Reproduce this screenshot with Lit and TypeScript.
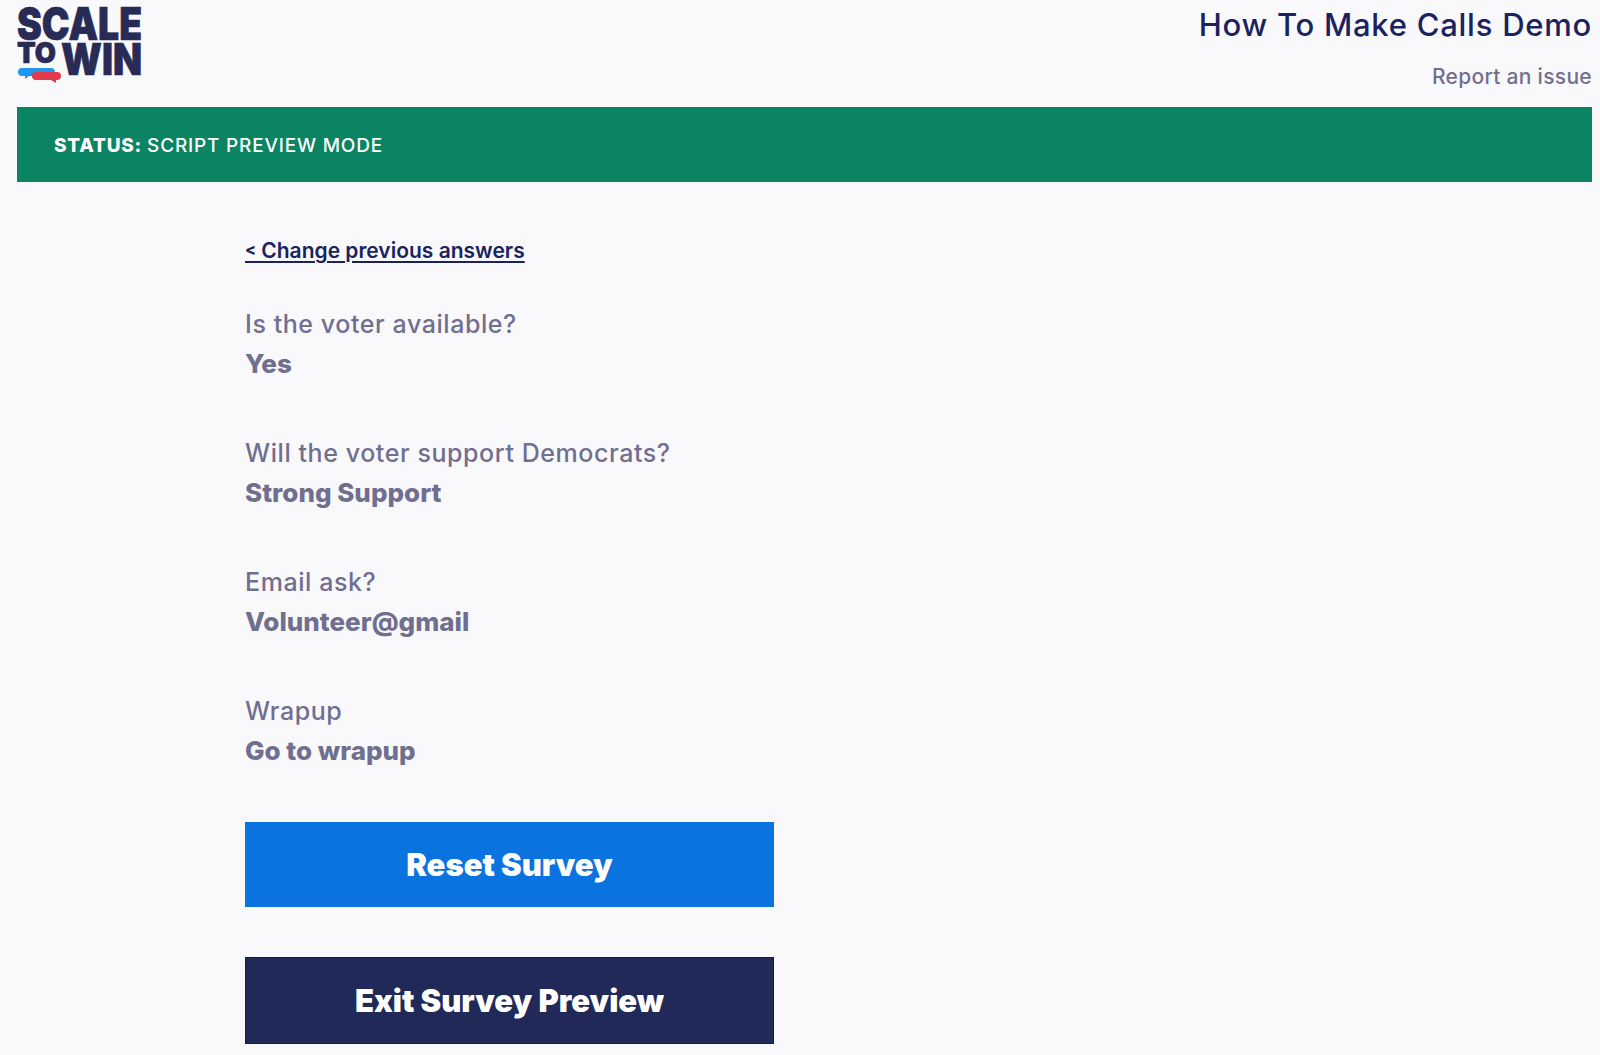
import { LitElement, html, css } from "lit";
import { customElement } from "lit/decorators.js";

const answers = [
  ["Is the voter available?", "Yes"],
  ["Will the voter support Democrats?", "Strong Support"],
  ["Email ask?", "Volunteer@gmail"],
  ["Wrapup", "Go to wrapup"],
];

@customElement("app-root")
export class AppRoot extends LitElement {
  static styles = css`
    :host {
      display: block;
      height: 1055px;
      overflow: hidden;
      box-sizing: border-box;
      padding: 0 8px 0 17px;
      background: #f9f9fc;
      font-family: Inter, "Liberation Sans", sans-serif;
    }
    .header {
      display: flex;
      justify-content: space-between;
      height: 107px;
    }
    .logo {
      display: block;
      width: 130px;
      height: 90px;
      overflow: visible;
    }
    .logo text {
      font-family: Inter, sans-serif;
      font-weight: 900;
      fill: #282b55;
      stroke: #282b55;
      stroke-width: 0.7;
    }
    .titles {
      display: flex;
      flex-direction: column;
      align-items: flex-end;
    }
    .title {
      margin-top: 5px;
      font-size: 31px;
      line-height: 40px;
      font-weight: 500;
      color: #1a2360;
      letter-spacing: 0.75px;
    }
    .report {
      margin-top: 19px;
      font-size: 21px;
      line-height: 26px;
      font-weight: 500;
      color: #716f8f;
      letter-spacing: 0.3px;
    }
    .status {
      height: 75px;
      box-sizing: border-box;
      padding: 2px 37px 0;
      display: flex;
      align-items: center;
      gap: 5px;
      background: #0b8463;
      color: #fff;
      font-size: 19px;
      font-weight: 500;
      letter-spacing: 0.8px;
    }
    .status b {
      font-weight: 800;
    }
    .content {
      width: 529px;
      margin-left: 228px;
      padding-top: 56px;
      display: flex;
      flex-direction: column;
    }
    .back {
      font-size: 21px;
      line-height: 26px;
      font-weight: 600;
      color: #1a2360;
      letter-spacing: 0;
      text-decoration: underline;
      text-underline-offset: 3px;
    }
    .lt {
      font-size: 16px;
      font-weight: 800;
      vertical-align: 3px;
      line-height: 1;
    }
    .answers {
      margin-top: 43px;
      display: flex;
      flex-direction: column;
      gap: 56px;
      color: #716f8f;
    }
    .q {
      font-size: 25px;
      line-height: 34px;
      font-weight: 500;
      letter-spacing: 0.57px;
    }
    .a {
      margin-top: 7px;
      font-size: 26px;
      line-height: 32px;
      font-weight: 800;
    }
    .btn {
      height: 85px;
      display: flex;
      align-items: center;
      justify-content: center;
      color: #fff;
      font-size: 31px;
      font-weight: 900;
    }
    .reset {
      margin-top: 55px;
      background: #0a73e0;
    }
    .exit {
      margin-top: 50px;
      height: 87px;
      background: #212959;
      border: 1px solid #10185c;
      box-sizing: border-box;
    }
  `;

  render() {
    return html`
      <div class="header">
        <svg class="logo" viewBox="0 0 130 90" aria-label="Scale to Win">
          <text x="0" y="40" font-size="45" textLength="125" lengthAdjust="spacingAndGlyphs">SCALE</text>
          <text x="0" y="63" font-size="28" textLength="39" lengthAdjust="spacingAndGlyphs">TO</text>
          <text x="44" y="75" font-size="44" textLength="81" lengthAdjust="spacingAndGlyphs">WIN</text>
          <path d="M5 68h29a4 4 0 0 1 0 8H12l-4 3v-3H5a4 4 0 0 1 0-8z" fill="#2196ee" />
          <path d="M19 72h21a4 4 0 0 1 0 8h-1v3l-5-3H19a4 4 0 0 1 0-8z" fill="#e33a4d" />
        </svg>
        <div class="titles">
          <div class="title">How To Make Calls Demo</div>
          <div class="report">Report an issue</div>
        </div>
      </div>
      <div class="status"><b>STATUS:</b> SCRIPT PREVIEW MODE</div>
      <div class="content">
        <div class="back"><span class="lt">&lt;</span> Change previous answers</div>
        <div class="answers">
          ${answers.map(
            ([q, a]) => html`<div>
              <div class="q">${q}</div>
              <div class="a">${a}</div>
            </div>`
          )}
        </div>
        <div class="btn reset">Reset Survey</div>
        <div class="btn exit">Exit Survey Preview</div>
      </div>
    `;
  }
}
